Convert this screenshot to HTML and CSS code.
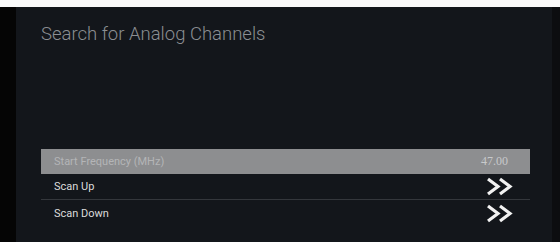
FILE: index.html
```html
<!DOCTYPE html>
<html>
<head>
<meta charset="utf-8">
<link rel="stylesheet" href="styles.css">
</head>
<body>
<div class="frame">
  <div class="topstrip"></div>
  <div class="main">
    <div class="leftstrip"></div>
    <div class="panel">
      <h1 class="title">Search for Analog Channels</h1>
      <div class="list">
        <div class="row active">
          <span class="label">Start Frequency (MHz)</span>
          <span class="value">47.00</span>
        </div>
        <div class="row sep">
          <span class="label">Scan Up</span>
          <svg class="chev" viewBox="0 0 30 19" width="30" height="19"><path d="M3 2 L13 9.5 L3 17 M15 2 L25 9.5 L15 17" fill="none" stroke="#f2f2f2" stroke-width="3.2" stroke-linejoin="miter"/></svg>
        </div>
        <div class="row">
          <span class="label">Scan Down</span>
          <svg class="chev" viewBox="0 0 30 19" width="30" height="19"><path d="M3 2 L13 9.5 L3 17 M15 2 L25 9.5 L15 17" fill="none" stroke="#f2f2f2" stroke-width="3.2" stroke-linejoin="miter"/></svg>
        </div>
      </div>
    </div>
    <div class="rightstrip"></div>
  </div>
</div>
</body>
</html>
```
FILE: styles.css
```css
html, body {
  margin: 0;
  padding: 0;
  background: #ffffff;
}
.frame {
  width: 560px;
  height: 242px;
  display: flex;
  flex-direction: column;
  overflow: hidden;
}
.topstrip {
  height: 7px;
  background: #fafafa;
  flex: none;
}
.main {
  flex: 1;
  display: flex;
}
.leftstrip {
  width: 16px;
  background: #050505;
  flex: none;
}
.rightstrip {
  width: 8px;
  background: #0c0d10;
  flex: none;
}
.panel {
  flex: 1;
  background: #13161b;
  padding: 0 22px 0 25px;
  display: flex;
  flex-direction: column;
}
.title {
  margin: 16px 0 0 0;
  font-family: Roboto, "Liberation Sans", sans-serif;
  font-weight: 300;
  font-size: 18.5px;
  line-height: 23px;
  color: #8b8e92;
}
.list {
  margin-top: 103px;
  display: flex;
  flex-direction: column;
}
.row {
  height: 26px;
  display: flex;
  align-items: center;
  justify-content: space-between;
  padding: 0 15px 0 13px;
  font-family: Roboto, "Liberation Sans", sans-serif;
  font-size: 11px;
  color: #dcdcdc;
}
.row.sep {
  border-bottom: 1px solid #34373c;
  height: 25px;
}
.row.active {
  background: #8d8e90;
  height: 25px;
  color: #b4b5b7;
}
.value {
  font-family: "Liberation Serif", serif;
  font-size: 12px;
  color: #c8c9cb;
  margin-right: 7px;
}
.chev {
  display: block;
}
```
